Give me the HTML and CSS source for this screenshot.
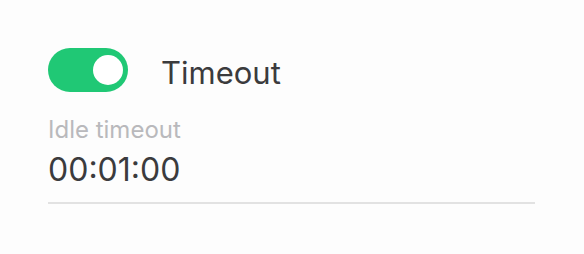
FILE: index.html
```html
<!DOCTYPE html>
<html lang="en">

<head>
    <meta charset="UTF-8">
    <title>Timeout</title>
    <link rel="stylesheet" href="styles.css">
</head>

<body>
    <section class="panel">
        <div class="row">
            <span class="toggle on"><span class="knob"></span></span>
            <h2>Timeout</h2>
        </div>
        <div class="field">
            <label>Idle timeout</label>
            <p class="value">00:01:00</p>
        </div>
    </section>
</body>

</html>
```

FILE: styles.css
```css
body {
    margin: 0;
    background-color: #fdfdfd;
    font-family: Inter, "Noto Sans", sans-serif;
}

.panel {
    width: 487px;
    padding-top: 48px;
    padding-left: 48px;
}

.row {
    display: flex;
    align-items: center;
    gap: 33px;
    height: 44px;
}

.toggle {
    display: flex;
    align-items: center;
    justify-content: flex-end;
    width: 80px;
    height: 44px;
    padding: 0 5px;
    box-sizing: border-box;
    border-radius: 22px;
    background-color: #20c875;
}

.knob {
    width: 30px;
    height: 30px;
    border-radius: 50%;
    background-color: white;
}

h2 {
    margin: 0;
    padding-top: 4px;
    font-size: 31px;
    font-weight: 400;
    color: #3b3b3d;
}

.field {
    margin-top: 23px;
    border-bottom: 2px solid #e2e2e2;
}

label {
    display: block;
    font-size: 24px;
    color: #b9b9bc;
}

.value {
    margin: 6px 0 13px;
    font-size: 32px;
    color: #3b3b3d;
}
```
